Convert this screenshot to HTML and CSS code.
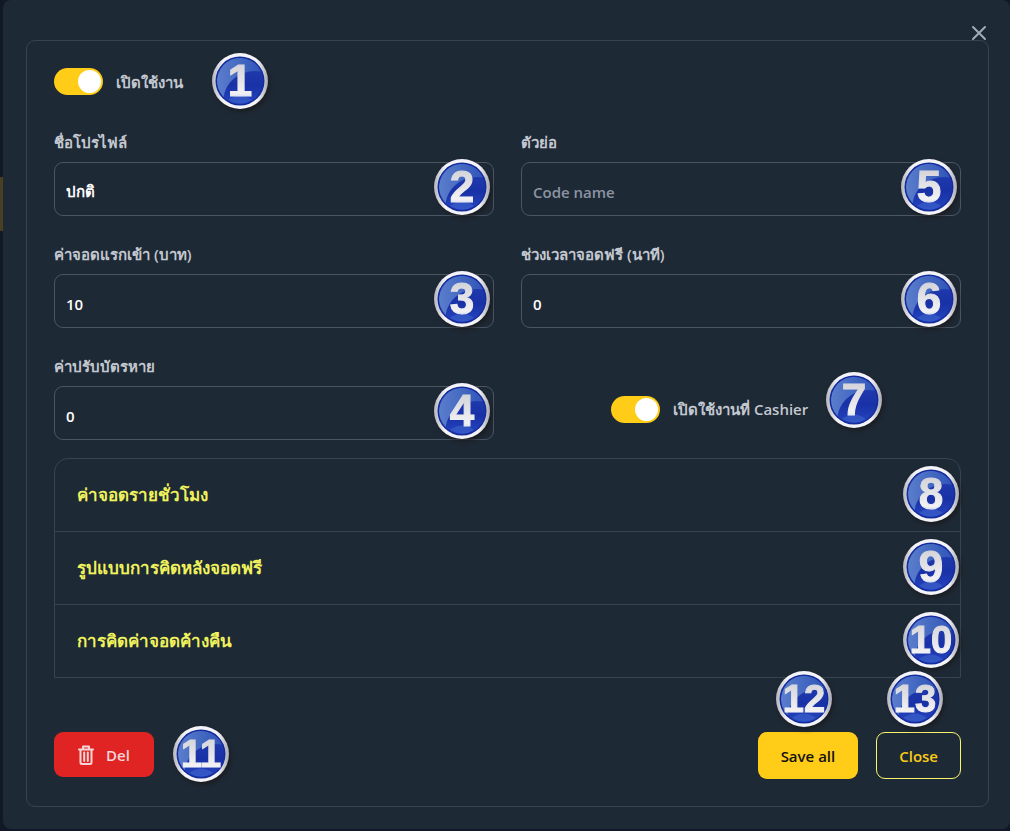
FILE: index.html
```html
<!DOCTYPE html>
<html lang="th">
<head>
    <meta charset="UTF-8">
    <meta name="viewport" content="width=device-width, initial-scale=1.0">
    <title>Profile</title>
    <link rel="stylesheet" href="styles.css">
</head>
<body>
    <svg class="defs" aria-hidden="true">
        <defs>
            <linearGradient id="ring" x1="0" y1="0" x2="1" y2="0">
                <stop offset="0" stop-color="#b4b4bc"/>
                <stop offset="0.2" stop-color="#f4f4f8"/>
                <stop offset="0.8" stop-color="#f4f4f8"/>
                <stop offset="1" stop-color="#a9a9b2"/>
            </linearGradient>
            <linearGradient id="disc" x1="0" y1="0" x2="0" y2="1">
                <stop offset="0" stop-color="#2442b4"/>
                <stop offset="0.6" stop-color="#1931a6"/>
                <stop offset="1" stop-color="#2545c0"/>
            </linearGradient>
            <linearGradient id="shine" x1="0" y1="0" x2="1" y2="0">
                <stop offset="0" stop-color="#5b7dcc"/>
                <stop offset="0.5" stop-color="#456ac2"/>
                <stop offset="1" stop-color="#3155b8"/>
            </linearGradient>
            <linearGradient id="digit" gradientUnits="userSpaceOnUse" x1="0" y1="12" x2="0" y2="45">
                <stop offset="0" stop-color="#d4d4da"/>
                <stop offset="0.85" stop-color="#f2f2f4"/>
                <stop offset="1" stop-color="#d8def4"/>
            </linearGradient>
            <symbol id="ball" viewBox="0 0 56 56">
                <circle cx="28" cy="28" r="28" fill="url(#ring)"/>
                <circle cx="28" cy="28" r="24.500" fill="#142c9c"/>
                <circle cx="28" cy="28" r="23" fill="url(#disc)"/>
                <path d="M11.700 44.200A23 23 0 1 1 49 18.500C31 15 14 27 11.700 44.200Z" fill="url(#shine)"/>
                <path d="M16 47Q28 38 40 47Q28 54 16 47Z" fill="#4064cc" opacity="0.6"/>
            </symbol>
        </defs>
    </svg>

    <div class="page">
        <div class="backdrop"><div class="backdrop-item"></div></div>
        <main class="modal">
            <button type="button" class="modal-close" aria-label="Close dialog">
                <svg viewBox="0 0 16 16"><path d="M2 2L14 14M14 2L2 14"/></svg>
            </button>
            <form class="panel">
                <div class="switch-row">
                    <input type="checkbox" class="switch" id="enabled" checked>
                    <label for="enabled">เปิดใช้งาน</label>
                    <svg class="badge after-label" viewBox="0 0 56 56"><use href="#ball"/><text x="28" y="43">1</text></svg>
                </div>

                <div class="fields">
                    <div class="field">
                        <label for="profileName">ชื่อโปรไฟล์</label>
                        <input type="text" id="profileName" value="ปกติ">
                        <svg class="badge in-field" viewBox="0 0 56 56"><use href="#ball"/><text x="28" y="43">2</text></svg>
                    </div>
                    <div class="field">
                        <label for="code">ตัวย่อ</label>
                        <input type="text" id="code" placeholder="Code name">
                        <svg class="badge in-field" viewBox="0 0 56 56"><use href="#ball"/><text x="28" y="43">5</text></svg>
                    </div>
                    <div class="field">
                        <label for="firstFee">ค่าจอดแรกเข้า (บาท)</label>
                        <input type="text" id="firstFee" value="10">
                        <svg class="badge in-field" viewBox="0 0 56 56"><use href="#ball"/><text x="28" y="43">3</text></svg>
                    </div>
                    <div class="field">
                        <label for="freeTime">ช่วงเวลาจอดฟรี (นาที)</label>
                        <input type="text" id="freeTime" value="0">
                        <svg class="badge in-field" viewBox="0 0 56 56"><use href="#ball"/><text x="28" y="43">6</text></svg>
                    </div>
                    <div class="field">
                        <label for="lostFee">ค่าปรับบัตรหาย</label>
                        <input type="text" id="lostFee" value="0">
                        <svg class="badge in-field" viewBox="0 0 56 56"><use href="#ball"/><text x="28" y="43">4</text></svg>
                    </div>
                    <div class="switch-row cashier">
                        <input type="checkbox" class="switch" id="cashier" checked>
                        <label for="cashier">เปิดใช้งานที่ Cashier</label>
                        <svg class="badge raised" viewBox="0 0 56 56"><use href="#ball"/><text x="28" y="43">7</text></svg>
                    </div>
                </div>

                <div class="accordion">
                    <button type="button">ค่าจอดรายชั่วโมง
                        <svg class="badge in-row" viewBox="0 0 56 56"><use href="#ball"/><text x="28" y="43">8</text></svg>
                    </button>
                    <button type="button">รูปแบบการคิดหลังจอดฟรี
                        <svg class="badge in-row" viewBox="0 0 56 56"><use href="#ball"/><text x="28" y="43">9</text></svg>
                    </button>
                    <button type="button">การคิดค่าจอดค้างคืน
                        <svg class="badge in-row" viewBox="0 0 56 56"><use href="#ball"/><text class="two" x="28" y="41">10</text></svg>
                    </button>
                </div>

                <div class="actions">
                    <button type="button" class="btn btn-del">
                        <svg class="trash" viewBox="0 0 16 20"><path d="M1 4.500H15M5 4V1.500H11V4M2.500 5V17.500Q2.500 19 4 19H12Q13.500 19 13.500 17.500V5M6.200 7.500V16M9.800 7.500V16"/></svg>
                        Del
                        <svg class="badge beside" viewBox="0 0 56 56"><use href="#ball"/><text class="two" x="28" y="41">11</text></svg>
                    </button>
                    <div class="actions-right">
                        <button type="submit" class="btn btn-save">Save all
                            <svg class="badge above" viewBox="0 0 56 56"><use href="#ball"/><text class="two" x="28" y="41">12</text></svg>
                        </button>
                        <button type="button" class="btn btn-close">Close
                            <svg class="badge above" viewBox="0 0 56 56"><use href="#ball"/><text class="two" x="28" y="41">13</text></svg>
                        </button>
                    </div>
                </div>
            </form>
        </main>
    </div>
</body>
</html>
```
FILE: styles.css
```css
* {box-sizing: border-box;}
body {margin: 0; background: #111827; color: #c3c8d0; font-family: "Open Sans", "Noto Sans", sans-serif; font-size: 15px; font-weight: 600; line-height: 24px;}
button, input {font: inherit;}
button {cursor: pointer;}
.defs {position: absolute; width: 0; height: 0;}

.page {display: flex; min-height: 100vh; padding-bottom: 2px;}
.backdrop {width: 3px; padding-top: 177px;}
.backdrop-item {height: 54px; background: #493f22;}
.modal {position: relative; flex: 1; padding: 40px 21px 22px 23px; background: #1e2936; border-radius: 8px;}
.modal-close {position: absolute; top: 25px; right: 23px; width: 16px; height: 16px; padding: 0; border: none; background: none;}
.modal-close svg {display: block; fill: none; stroke: #a3abb7; stroke-width: 2; stroke-linecap: round;}
.panel {padding: 27px; border: 1px solid #374350; border-radius: 9px;}

/* switches */
.switch-row {display: flex; align-items: center; gap: 13px; height: 27px;}
.switch-row label {white-space: nowrap;}
.switch {appearance: none; flex: none; width: 49px; height: 27px; margin: 0; padding: 2px; border-radius: 14px; background: #ffcc17; display: flex; justify-content: flex-end; cursor: pointer;}
.switch::before {content: ""; width: 23px; height: 23px; border-radius: 50%; background: #fff;}
.switch:not(:checked) {justify-content: flex-start; background: #4b5563;}
.cashier {align-self: end; height: 54px; padding-left: 90px; margin-bottom: 4px;}

/* form fields */
.fields {display: grid; grid-template-columns: 1fr 1fr; gap: 26px 27px; margin-top: 35px;}
.field {position: relative;}
.field label {display: block; margin-bottom: 8px;}
.field input {display: block; width: 100%; height: 54px; padding: 6px 11px 0; border: 1px solid #4b5563; border-radius: 9px; background: transparent; color: #fff;}
.field input::placeholder {color: #8b94a2; opacity: 1;}

.accordion {margin-top: 18px; border: 1px solid #374350; border-radius: 14px 14px 0 0;}
.accordion button {position: relative; display: flex; align-items: center; width: 100%; padding: 24px 22px; border: none; background: none; color: #f0f25c; font-size: 17px; font-weight: 700;}
.accordion button + button {border-top: 1px solid #374350;}

.actions {display: flex; justify-content: space-between; align-items: flex-start; margin-top: 54px;}
.actions-right {display: flex; gap: 18px;}
.btn {position: relative; display: flex; align-items: center; justify-content: center; height: 47px; padding: 0 22px; border: 1px solid transparent; border-radius: 9px;}
.btn-del {gap: 12px; height: 45px; padding: 0 23px; background: #e02424; color: #f3d5d8;}
.btn-save {background: #ffcc17; color: #111;}
.btn-close {border-color: #faf56c; background: none; color: #facc15;}
.trash {width: 16px; height: 20px; fill: none; stroke: #f3d5d8; stroke-width: 2; stroke-linejoin: round; stroke-linecap: round;}

/* numbered badges over the controls */
.badge {width: 56px; height: 56px; overflow: visible; pointer-events: none; filter: drop-shadow(2px 3px 2px rgba(24, 24, 24, 0.7));}
.badge text {font-family: "Liberation Sans", Arial, sans-serif; font-size: 44px; font-weight: 700; text-anchor: middle; fill: url(#digit); stroke: url(#digit); stroke-width: 1;}
.badge .two {font-size: 38px;}
.after-label {flex: none; margin: 0 0 2px 16px;}
.raised {flex: none; margin: 0 0 18px 5px;}
.in-field {position: absolute; top: 29px; right: 4px;}
.in-row {position: absolute; top: 7px; right: 1px;}
.beside {position: absolute; top: -7px; left: calc(100% + 20px);}
.above {position: absolute; bottom: 51px; left: calc(50% - 32px); z-index: 1;}
```
